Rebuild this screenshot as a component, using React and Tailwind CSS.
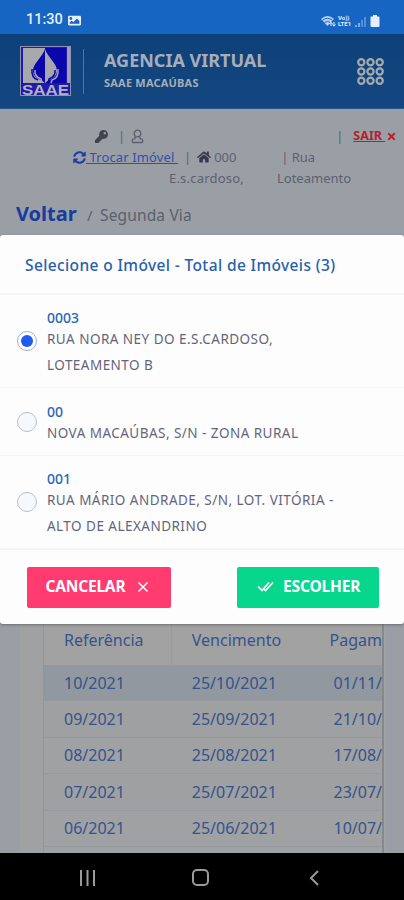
import React from 'react';
import { FaKey, FaSyncAlt, FaHome, FaTimes, FaImage } from 'react-icons/fa';

const imoveis = [
  { codigo: '0003', linhas: ['RUA NORA NEY DO E.S.CARDOSO,', 'LOTEAMENTO B'], altura: 'h-[93px]' },
  { codigo: '00', linhas: ['NOVA MACAÚBAS, S/N - ZONA RURAL'], altura: 'h-[68px]' },
  { codigo: '001', linhas: ['RUA MÁRIO ANDRADE, S/N, LOT. VITÓRIA -', 'ALTO DE ALEXANDRINO'], altura: 'h-[93px]' },
];

const faturas = [
  { referencia: '10/2021', vencimento: '25/10/2021', pagamento: '01/11/' },
  { referencia: '09/2021', vencimento: '25/09/2021', pagamento: '21/10/' },
  { referencia: '08/2021', vencimento: '25/08/2021', pagamento: '17/08/' },
  { referencia: '07/2021', vencimento: '25/07/2021', pagamento: '23/07/' },
  { referencia: '06/2021', vencimento: '25/06/2021', pagamento: '10/07/' },
];

function StatusBar() {
  return (
    <div className="flex h-[34px] items-center bg-[#1765c3] pt-[7px] pl-[26px] text-[#e4effb]">
      <span className="w-[38px] whitespace-nowrap font-['Roboto',sans-serif] text-[14.5px] font-medium leading-none">11:30</span>
      <FaImage size={13} className="ml-1" />
      <div className="ml-[239px] flex items-center">
        <svg width="16" height="14" viewBox="0 0 16 14" fill="none">
          <path d="M1 5Q7.500-1 14 5L7.500 12Z" fill="#b9d2ee" />
          <path d="M2.500 6.300Q7.500 2.300 12.500 6.300M4.500 8.500Q7.500 6.300 10.500 8.500" stroke="#1765c3" />
          <path d="M11 12V8.500M9.500 10L11 8.300L12.500 10M14 8V12M12.500 10.500L14 12.200L15.500 10.500" stroke="#e4effb" />
        </svg>
        <div className="ml-[2px] flex w-[15px] flex-col whitespace-nowrap font-['Roboto',sans-serif] text-[6px] font-bold leading-[6px]">
          <span>Vo))</span>
          <span>LTE1</span>
        </div>
        <svg width="26" height="14" viewBox="0 0 26 14" className="ml-[2px]" fill="currentColor">
          <path d="M0 13V11H2V13ZM3 13V9H5V13Z" opacity=".5" />
          <path d="M6 13V6H8V13ZM9 13V3H11V13Z" opacity=".3" />
          <path d="M16 2.500H18V1H22V2.500H23.500Q24.500 2.500 24.500 3.500V12Q24.500 13 23.500 13H16.500Q15.500 13 15.500 12V3.500Q15.500 2.500 16 2.500Z" />
        </svg>
      </div>
    </div>
  );
}

function Logo() {
  return (
    <svg width="51" height="50" viewBox="0 0 51 50" className="flex-shrink-0">
      <path d="M0 0H51V50H0Z" fill="#8f90b5" />
      <path d="M1 1H50V49H1Z" fill="#2019a9" />
      <path d="M3 2H25V37H3Z" fill="#a6a8ae" />
      <path d="M25 2H46V37H25Z" fill="#0b05ac" />
      <path d="M47 1H50V37H47Z" fill="#9fa0b0" />
      <path d="M25 3C22 12 13 17 13 25C13 30 18 33 21 34L25 37Z" fill="#0b05ac" />
      <path d="M25 3C28 12 37 17 37 25C37 30 32 33 29 34L25 37Z" fill="#a6a8ae" />
      <path d="M15 24Q14 30 21 33L22 37" fill="none" stroke="#a6a8ae" strokeWidth="1.500" />
      <path d="M12 23Q11 32 18 34" fill="none" stroke="#0b05ac" strokeWidth="1.500" />
      <path d="M38 23Q39 32 32 34L31 37" fill="none" stroke="#a6a8ae" strokeWidth="1.500" />
      <path d="M35 24Q36 30 29 33L28 37" fill="none" stroke="#0b05ac" strokeWidth="1.500" />
      <text x="2" y="48.500" fill="#b3b4bc" fontFamily="Liberation Sans, sans-serif" fontSize="14" fontWeight="700" textLength="47" lengthAdjust="spacingAndGlyphs">SAAE</text>
    </svg>
  );
}

function Header() {
  return (
    <header className="flex h-[75px] items-center border-b border-[#255a91] bg-gradient-to-b from-[#0d4179] to-[#15467f] pl-5">
      <Logo />
      <div className="ml-3 h-[45px] w-px bg-[#4779a8]" />
      <div className="ml-5 w-[210px] whitespace-nowrap font-bold text-[#a5aeb9]">
        <h1 className="-mt-[2px] text-[18px] leading-[24px]">AGENCIA VIRTUAL</h1>
        <p className="mt-px text-[11px] leading-[20px] tracking-[0.2px]">SAAE MACAÚBAS</p>
      </div>
      <svg width="27" height="27" viewBox="0 0 27 27" className="ml-[43px]" fill="none" stroke="#a5aaae" strokeWidth="2.200">
        {[4.3, 13.5, 22.7].map((y) =>
          [4.3, 13.5, 22.7].map((x) => <circle key={`${x}-${y}`} cx={x} cy={y} r="3.100" />)
        )}
      </svg>
    </header>
  );
}

function AccountBar() {
  return (
    <div className="h-[94px] whitespace-nowrap pt-[17px] text-[13px] leading-[20px] text-[#5c616d]">
      <div className="flex h-[20px] items-center">
        <FaKey size={13} className="ml-[95px] text-[#40444f]" />
        <span className="ml-[10px]">|</span>
        <svg width="13" height="15" viewBox="0 0 13 15" className="ml-[6px]" fill="none" stroke="#5c616d" strokeWidth="1.300">
          <circle cx="6.500" cy="4.500" r="3.300" />
          <path d="M4 8V9.500L1.500 10.500Q.7 13.500 2 13.500H11Q12.300 13.500 11.500 10.500L9 9.500V8" />
        </svg>
        <span className="ml-[192px]">|</span>
        <a className="ml-[10px] flex items-center font-bold text-[#b5212d]">
          <span className="w-[33px] text-[12.5px] underline">SAIR&nbsp;</span>
          <FaTimes size={11} />
        </a>
      </div>
      <div className="mt-px flex h-[20px] items-center">
        <FaSyncAlt size={13} className="ml-[73px] text-[#203fa0]" />
        <a className="w-[89px] tracking-[0.12px] text-[#344fa6] underline">&nbsp;Trocar Imóvel&nbsp;</a>
        <span className="ml-[9px]">|</span>
        <FaHome size={14} className="ml-[6px] text-[#353a50]" />
        <span className="ml-[3px] w-[67px]">000</span>
        <span>| Rua</span>
      </div>
      <div className="mt-px flex h-[20px]">
        <span className="ml-[169px] w-[108px] tracking-[0.2px]">E.s.cardoso,</span>
        <span>Loteamento</span>
      </div>
    </div>
  );
}

function Breadcrumb() {
  return (
    <div className="flex h-8 items-baseline whitespace-nowrap pl-4 leading-[22px]">
      <a className="w-[71px] text-[20px] font-bold text-[#173b9e]">Voltar</a>
      <span className="w-[13px] text-[15px] text-[#5b606b]">/</span>
      <span className="text-[15.5px] tracking-[0.15px] text-[#5b606b]">Segunda Via</span>
    </div>
  );
}

function InvoiceTable() {
  return (
    <div className="h-[618px] bg-[#9a9fa6] pl-5 pr-[18px]">
      <div className="h-full bg-[#a0a1a2] pt-[389px] pl-[23px]">
        <div className="h-full w-[341px] overflow-hidden border-l border-r-2 border-[#929599] border-r-[#85898d] text-[16px] text-[#35538d]">
          <div className="flex h-[41px] whitespace-nowrap bg-[#a2a2a2] leading-[32px]">
            <div className="w-[128px] border-r border-[#999b9d] pl-[20px]">Referência</div>
            <div className="w-[138px] pl-[20px]">Vencimento</div>
            <div className="pl-[20px]">Pagam</div>
          </div>
          {faturas.map((f, i) => (
            <div
              key={f.referencia}
              className={`flex h-[36.4px] items-center whitespace-nowrap border-b border-[#969a9e] ${i === 0 ? 'bg-[#92989f]' : i % 2 === 1 ? 'bg-[#9fa0a1]' : 'bg-[#a0a1a2]'}`}
            >
              <div className="w-[128px] pl-[20px]">{f.referencia}</div>
              <div className="w-[138px] pl-[20px]">{f.vencimento}</div>
              <div className="pl-[24px]">{f.pagamento}</div>
            </div>
          ))}
        </div>
      </div>
    </div>
  );
}

function SelectDialog() {
  return (
    <div role="dialog" className="absolute top-[235px] left-0 h-[389px] w-full rounded-[3px] bg-[#fdfdfe] shadow-[0_1px_3px_#555a]">
      <h2 className="h-[60px] whitespace-nowrap border-b-2 border-[#f5f5f7] pl-[25px] text-[15.5px] font-medium leading-[60px] tracking-[0.38px] text-[#2860aa]">
        Selecione o Imóvel - Total de Imóveis (3)
      </h2>
      {imoveis.map((imovel, i) => (
        <label key={imovel.codigo} className={`flex items-center border-b border-[#f5f5f7] pl-[17px] ${imovel.altura}`}>
          <span className={`flex h-5 w-5 items-center justify-center rounded-full border ${i === 0 ? 'border-[#9aaeea] bg-white' : 'border-[#b9bec8] bg-[#f5f8fc]'}`}>
            {i === 0 && <span className="h-3 w-3 rounded-full bg-[#1f5cf4]" />}
          </span>
          <span className="ml-[10px] whitespace-nowrap pt-[5px] text-[13.5px] tracking-[0.47px] text-[#64647c]">
            <b className="block text-[14px] font-medium leading-[17px] tracking-normal text-[#2868b4]">{imovel.codigo}</b>
            {imovel.linhas.map((linha) => (
              <span key={linha} className="block leading-[26px]">{linha}</span>
            ))}
          </span>
        </label>
      ))}
      <div className="flex h-[75px] items-center justify-between border-t border-[#f3f3f5] pr-[25px] pl-[27px] text-[15.5px] font-bold text-white">
        <button className="flex h-[41px] w-[144px] items-center rounded-[2px] bg-[#ff3b6f] pl-[18.5px]">
          <span className="w-[91px] text-left tracking-[-0.2px]">CANCELAR</span>
          <svg width="12" height="12" viewBox="0 0 12 12" stroke="#fff" strokeWidth="1.500">
            <path d="M1.500 1.500L10.500 10.500M10.500 1.500L1.500 10.500" />
          </svg>
        </button>
        <button className="flex h-[41px] w-[142px] items-center rounded-[2px] bg-[#07d68d] pl-5">
          <svg width="17" height="12" viewBox="0 0 17 12" className="mr-[9px]" fill="none" stroke="#fff" strokeWidth="1.700">
            <path d="M1 5.500L5 9.500L12 1.500M6 7L8.500 9.500L16 1.500" />
          </svg>
          <span className="tracking-[-0.15px]">ESCOLHER</span>
        </button>
      </div>
    </div>
  );
}

function NavBar() {
  return (
    <nav className="flex h-[47px] items-center bg-black pt-[2px] text-[#9a9a9a]">
      <svg width="17" height="16" viewBox="0 0 17 16" className="ml-[79px]" stroke="currentColor" strokeWidth="2">
        <path d="M2 0V16M8.500 0V16M15 0V16" />
      </svg>
      <span className="ml-[96px] h-[17px] w-[17px] rounded-[5px] border-2 border-[#9a9a9a]" />
      <svg width="10" height="16" viewBox="0 0 10 16" className="ml-[100px]" fill="none" stroke="currentColor" strokeWidth="2">
        <path d="M9 1L2 8L9 15" />
      </svg>
    </nav>
  );
}

export default function App() {
  return (
    <div className="relative flex h-[900px] w-[404px] flex-col overflow-hidden bg-[#9a9fa6] font-['Noto_Sans',sans-serif]">
      <StatusBar />
      <Header />
      <AccountBar />
      <Breadcrumb />
      <InvoiceTable />
      <NavBar />
      <SelectDialog />
    </div>
  );
}
